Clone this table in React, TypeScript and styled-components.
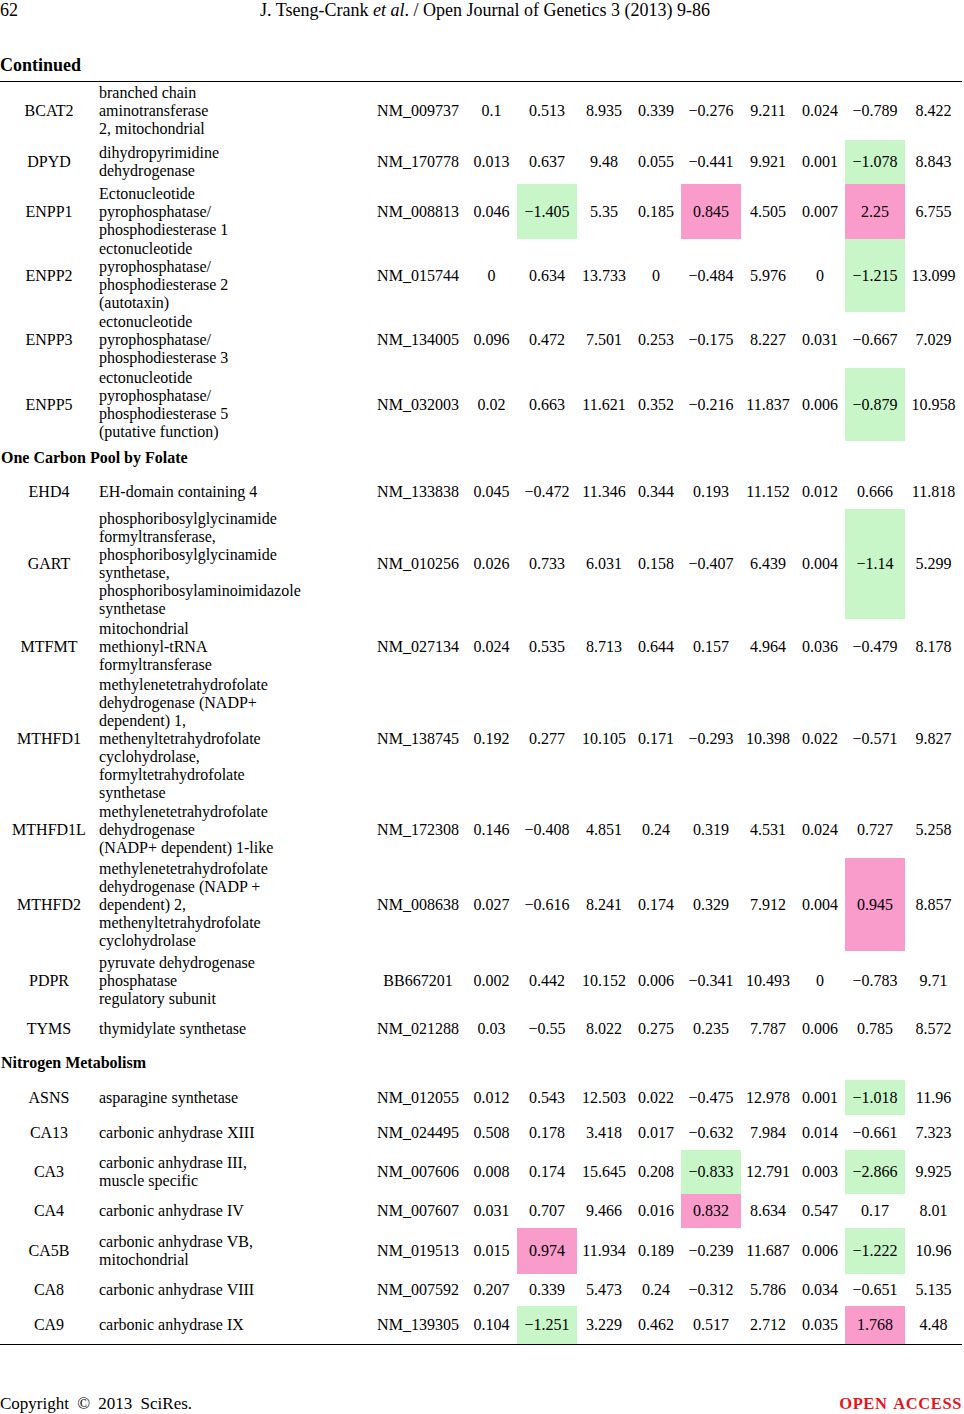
import { createGlobalStyle, styled } from "styled-components";

type Tone = "g" | "p" | undefined;

interface GeneRow {
  gene: string;
  desc: string;
  acc: string;
  vals: string[];
  h: number;
  tones?: Record<number, Tone>;
}

type Block = { title?: string; rows: GeneRow[] };

const M = "\u2212";

const blocks: Block[] = [
  {
    rows: [
      { gene: "BCAT2", desc: "branched chain\naminotransferase\n2, mitochondrial", acc: "NM_009737", h: 58, vals: ["0.1", "0.513", "8.935", "0.339", `${M}0.276`, "9.211", "0.024", `${M}0.789`, "8.422"] },
      { gene: "DPYD", desc: "dihydropyrimidine\ndehydrogenase", acc: "NM_170778", h: 44, tones: { 7: "g" }, vals: ["0.013", "0.637", "9.48", "0.055", `${M}0.441`, "9.921", "0.001", `${M}1.078`, "8.843"] },
      { gene: "ENPP1", desc: "Ectonucleotide\npyrophosphatase/\nphosphodiesterase 1", acc: "NM_008813", h: 55, tones: { 1: "g", 4: "p", 7: "p" }, vals: ["0.046", `${M}1.405`, "5.35", "0.185", "0.845", "4.505", "0.007", "2.25", "6.755"] },
      { gene: "ENPP2", desc: "ectonucleotide\npyrophosphatase/\nphosphodiesterase 2\n(autotaxin)", acc: "NM_015744", h: 73, tones: { 7: "g" }, vals: ["0", "0.634", "13.733", "0", `${M}0.484`, "5.976", "0", `${M}1.215`, "13.099"] },
      { gene: "ENPP3", desc: "ectonucleotide\npyrophosphatase/\nphosphodiesterase 3", acc: "NM_134005", h: 56, vals: ["0.096", "0.472", "7.501", "0.253", `${M}0.175`, "8.227", "0.031", `${M}0.667`, "7.029"] },
      { gene: "ENPP5", desc: "ectonucleotide\npyrophosphatase/\nphosphodiesterase 5\n(putative function)", acc: "NM_032003", h: 73, tones: { 7: "g" }, vals: ["0.02", "0.663", "11.621", "0.352", `${M}0.216`, "11.837", "0.006", `${M}0.879`, "10.958"] },
    ],
  },
  {
    title: "One Carbon Pool by Folate",
    rows: [
      { gene: "EHD4", desc: "EH-domain containing 4", acc: "NM_133838", h: 34, vals: ["0.045", `${M}0.472`, "11.346", "0.344", "0.193", "11.152", "0.012", "0.666", "11.818"] },
      { gene: "GART", desc: "phosphoribosylglycinamide\nformyltransferase,\nphosphoribosylglycinamide\nsynthetase,\nphosphoribosylaminoimidazole\nsynthetase", acc: "NM_010256", h: 110, tones: { 7: "g" }, vals: ["0.026", "0.733", "6.031", "0.158", `${M}0.407`, "6.439", "0.004", `${M}1.14`, "5.299"] },
      { gene: "MTFMT", desc: "mitochondrial\nmethionyl-tRNA\nformyltransferase", acc: "NM_027134", h: 56, vals: ["0.024", "0.535", "8.713", "0.644", "0.157", "4.964", "0.036", `${M}0.479`, "8.178"] },
      { gene: "MTHFD1", desc: "methylenetetrahydrofolate\ndehydrogenase (NADP+\ndependent) 1,\nmethenyltetrahydrofolate\ncyclohydrolase,\nformyltetrahydrofolate\nsynthetase", acc: "NM_138745", h: 127, vals: ["0.192", "0.277", "10.105", "0.171", `${M}0.293`, "10.398", "0.022", `${M}0.571`, "9.827"] },
      { gene: "MTHFD1L", desc: "methylenetetrahydrofolate\ndehydrogenase\n(NADP+ dependent) 1-like", acc: "NM_172308", h: 56, vals: ["0.146", `${M}0.408`, "4.851", "0.24", "0.319", "4.531", "0.024", "0.727", "5.258"] },
      { gene: "MTHFD2", desc: "methylenetetrahydrofolate\ndehydrogenase (NADP +\ndependent) 2,\nmethenyltetrahydrofolate\ncyclohydrolase", acc: "NM_008638", h: 93, tones: { 7: "p" }, vals: ["0.027", `${M}0.616`, "8.241", "0.174", "0.329", "7.912", "0.004", "0.945", "8.857"] },
      { gene: "PDPR", desc: "pyruvate dehydrogenase\nphosphatase\nregulatory subunit", acc: "BB667201", h: 60, vals: ["0.002", "0.442", "10.152", "0.006", `${M}0.341`, "10.493", "0", `${M}0.783`, "9.71"] },
      { gene: "TYMS", desc: "thymidylate synthetase", acc: "NM_021288", h: 35, vals: ["0.03", `${M}0.55`, "8.022", "0.275", "0.235", "7.787", "0.006", "0.785", "8.572"] },
    ],
  },
  {
    title: "Nitrogen Metabolism",
    rows: [
      { gene: "ASNS", desc: "asparagine synthetase", acc: "NM_012055", h: 35, tones: { 7: "g" }, vals: ["0.012", "0.543", "12.503", "0.022", `${M}0.475`, "12.978", "0.001", `${M}1.018`, "11.96"] },
      { gene: "CA13", desc: "carbonic anhydrase XIII", acc: "NM_024495", h: 35, vals: ["0.508", "0.178", "3.418", "0.017", `${M}0.632`, "7.984", "0.014", `${M}0.661`, "7.323"] },
      { gene: "CA3", desc: "carbonic anhydrase III,\nmuscle specific", acc: "NM_007606", h: 44, tones: { 4: "g", 7: "g" }, vals: ["0.008", "0.174", "15.645", "0.208", `${M}0.833`, "12.791", "0.003", `${M}2.866`, "9.925"] },
      { gene: "CA4", desc: "carbonic anhydrase IV", acc: "NM_007607", h: 34, tones: { 4: "p" }, vals: ["0.031", "0.707", "9.466", "0.016", "0.832", "8.634", "0.547", "0.17", "8.01"] },
      { gene: "CA5B", desc: "carbonic anhydrase VB,\nmitochondrial", acc: "NM_019513", h: 46, tones: { 1: "p", 7: "g" }, vals: ["0.015", "0.974", "11.934", "0.189", `${M}0.239`, "11.687", "0.006", `${M}1.222`, "10.96"] },
      { gene: "CA8", desc: "carbonic anhydrase VIII", acc: "NM_007592", h: 32, vals: ["0.207", "0.339", "5.473", "0.24", `${M}0.312`, "5.786", "0.034", `${M}0.651`, "5.135"] },
      { gene: "CA9", desc: "carbonic anhydrase IX", acc: "NM_139305", h: 38, tones: { 1: "g", 7: "p" }, vals: ["0.104", `${M}1.251`, "3.229", "0.462", "0.517", "2.712", "0.035", "1.768", "4.48"] },
    ],
  },
];

const App = () => {
  return (
    <Page>
      <GlobalStyle />
      <Header>
        <span>62</span>
        <RunningTitle>
          J. Tseng-Crank <i>et al</i>. / Open Journal of Genetics 3 (2013) 9-86
        </RunningTitle>
        <span />
      </Header>

      <Caption>Continued</Caption>

      <Table>
        {blocks.map((block, bi) => (
          <div key={bi}>
            {block.title && <SectionTitle>{block.title}</SectionTitle>}
            {block.rows.map((r) => (
              <Row key={r.gene} $h={r.h}>
                <Cell>{r.gene}</Cell>
                <Desc>{r.desc}</Desc>
                <Cell>{r.acc}</Cell>
                {r.vals.map((v, i) => (
                  <Cell key={i} $tone={r.tones?.[i]}>
                    {v}
                  </Cell>
                ))}
              </Row>
            ))}
          </div>
        ))}
      </Table>

      <Footer>
        <Copyright>Copyright © 2013 SciRes.</Copyright>
        <OpenAccess>OPEN ACCESS</OpenAccess>
      </Footer>
    </Page>
  );
};

export default App;

const GlobalStyle = createGlobalStyle`
  html, body {
    margin: 0;
    padding: 0;
    background: #fff;
  }
  body {
    font-family: "Liberation Serif", "Times New Roman", serif;
    color: #000;
  }
`;

const Page = styled.div`
  width: 964px;
  min-height: 1414px;
  display: flex;
  flex-direction: column;
  font-family: "Liberation Serif", "Times New Roman", serif;
`;

const Header = styled.div`
  display: grid;
  grid-template-columns: 60px 1fr 60px;
  height: 20px;
  line-height: 20px;
  font-size: 18px;
`;

const RunningTitle = styled.span`
  text-align: center;
  padding-left: 6px;
`;

const Caption = styled.div`
  margin-top: 35px;
  height: 20px;
  line-height: 20px;
  font-size: 18px;
  font-weight: 700;
  margin-bottom: 6px;
`;

const Table = styled.div`
  width: 962px;
  border-top: 1px solid #000;
  border-bottom: 1px solid #000;
`;

const SectionTitle = styled.div`
  height: 34px;
  display: flex;
  align-items: center;
  padding-left: 1px;
  font-size: 16px;
  font-weight: 700;
`;

const Row = styled.div<{ $h: number }>`
  display: grid;
  grid-template-columns: 98px 272px 96px 51px 60px 54px 50px 60px 54px 50px 60px 57px;
  height: ${(p) => p.$h}px;
  font-size: 16px;
  line-height: 18px;
`;

const Cell = styled.div<{ $tone?: Tone }>`
  display: flex;
  align-items: center;
  justify-content: center;
  white-space: nowrap;
  background: ${(p) =>
    p.$tone === "g" ? "#c8f6c8" : p.$tone === "p" ? "#f99bcb" : "transparent"};
`;

const Desc = styled.div`
  display: flex;
  align-items: center;
  padding-left: 1px;
  white-space: pre-line;
`;

const Footer = styled.div`
  margin-top: auto;
  height: 20px;
  line-height: 20px;
  display: flex;
  justify-content: space-between;
  align-items: center;
`;

const Copyright = styled.span`
  font-size: 17px;
  word-spacing: 4px;
`;

const OpenAccess = styled.span`
  font-size: 16.5px;
  font-weight: 700;
  color: #e8141c;
  letter-spacing: 0.6px;
  word-spacing: 2px;
  padding-right: 2px;
`;
